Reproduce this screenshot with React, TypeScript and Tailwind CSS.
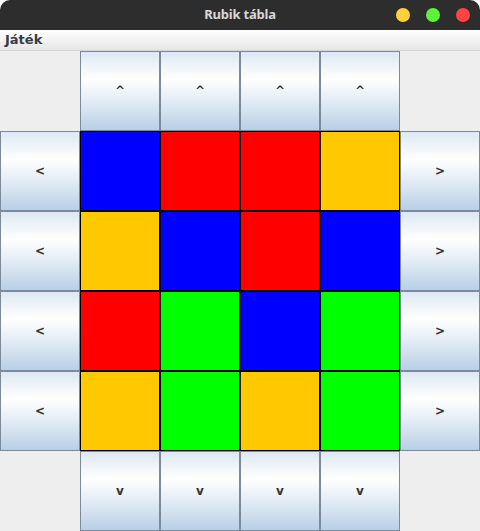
import React from 'react';

const colors: Record<string, string> = {
  B: 'bg-[#0000ff]',
  R: 'bg-[#ff0000]',
  Y: 'bg-[#ffc800]',
  G: 'bg-[#00ff00]',
};

const board = [
  ['B', 'R', 'R', 'Y'],
  ['Y', 'B', 'R', 'B'],
  ['R', 'G', 'B', 'G'],
  ['Y', 'G', 'Y', 'G'],
];

function ArrowButton({ label }: { label: string }) {
  return (
    <button className="w-[80px] h-[80px] border border-[#7a8a99] bg-[linear-gradient(to_bottom,#dde8f3_0%,#ffffff_35%,#e6eef7_60%,#b8cfe5_100%)] text-[12px] font-bold text-[#333333] flex items-center justify-center font-['DejaVu_Sans',sans-serif]">
      {label}
    </button>
  );
}

function Empty() {
  return <div className="w-[80px] h-[80px]" />;
}

export default function App() {
  return (
    <div className="w-[480px] h-[531px] bg-white overflow-hidden font-['Noto_Sans',sans-serif]">
      {/* title bar */}
      <div className="h-[30px] bg-[#2d2d2d] rounded-t-[10px] flex items-center relative">
        <span className="mx-auto text-[13px] font-bold text-[#d8d8d8] font-['Noto_Sans',sans-serif] tracking-[-0.2px]">
          Rubik tábla
        </span>
        <div className="absolute right-[10px] top-[8px] flex gap-[16px]">
          <span className="w-[14px] h-[14px] rounded-full bg-[#fdd13a]" />
          <span className="w-[14px] h-[14px] rounded-full bg-[#5ef03b]" />
          <span className="w-[14px] h-[14px] rounded-full bg-[#ff4444]" />
        </div>
      </div>

      {/* menu bar */}
      <div className="h-[21px] bg-[linear-gradient(to_bottom,#ffffff,#e6e6e6)] border-b border-[#d4d4d4] flex items-center px-[5px]">
        <span className="text-[13px] font-bold text-[#3a3a44] font-['DejaVu_Sans',sans-serif]">Játék</span>
      </div>

      {/* content */}
      <div className="bg-[#eeeeee] grid grid-cols-[repeat(6,80px)] grid-rows-[repeat(6,80px)]">
        <Empty />
        {[0, 1, 2, 3].map((i) => (
          <ArrowButton key={'u' + i} label="^" />
        ))}
        <Empty />

        {board.map((row, r) => (
          <React.Fragment key={r}>
            <ArrowButton label="<" />
            {row.map((c, i) => (
              <div key={i} className={`w-[80px] h-[80px] border border-black ${colors[c]}`} />
            ))}
            <ArrowButton label=">" />
          </React.Fragment>
        ))}

        <Empty />
        {[0, 1, 2, 3].map((i) => (
          <ArrowButton key={'d' + i} label="v" />
        ))}
        <Empty />
      </div>
    </div>
  );
}
